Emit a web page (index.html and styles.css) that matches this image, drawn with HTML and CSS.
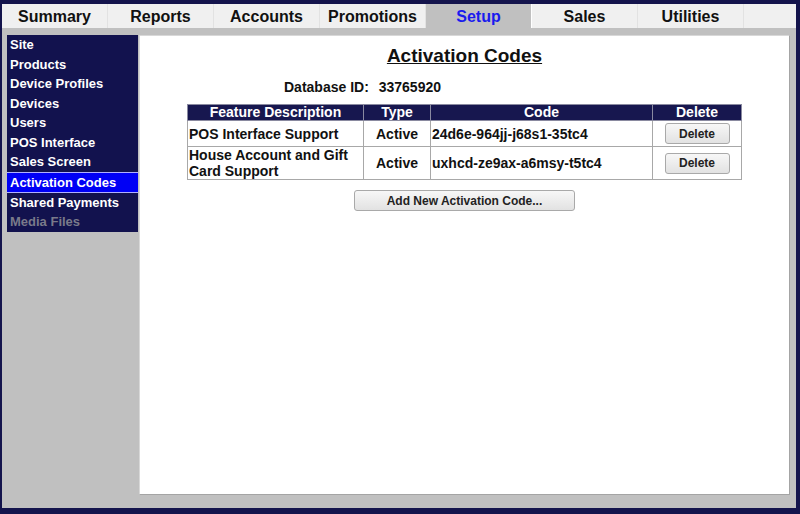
FILE: index.html
```html
<!DOCTYPE html>
<html lang="en">
<head>
  <meta charset="UTF-8" />
  <title>Setup - Activation Codes</title>
  <link rel="stylesheet" href="styles.css">
</head>
<body>
  <div class="frame">
    <div class="tabs">
      <div class="tab">Summary</div>
      <div class="tab">Reports</div>
      <div class="tab">Accounts</div>
      <div class="tab">Promotions</div>
      <div class="tab selected">Setup</div>
      <div class="tab">Sales</div>
      <div class="tab">Utilities</div>
      <div class="tab-fill"></div>
    </div>

    <div class="main">
      <div class="side-nav">
        <div class="nav-item">Site</div>
        <div class="nav-item">Products</div>
        <div class="nav-item">Device Profiles</div>
        <div class="nav-item">Devices</div>
        <div class="nav-item">Users</div>
        <div class="nav-item">POS Interface</div>
        <div class="nav-item">Sales Screen</div>
        <div class="nav-item active">Activation Codes</div>
        <div class="nav-item">Shared Payments</div>
        <div class="nav-item disabled">Media Files</div>
      </div>

      <div class="panel">
        <h1>Activation Codes</h1>
        <div class="db-row">
          <span class="db-label">Database ID:</span>
          <span class="db-value">33765920</span>
        </div>

        <table class="codes">
          <tr>
            <th class="col-desc">Feature Description</th>
            <th class="col-type">Type</th>
            <th class="col-code">Code</th>
            <th class="col-del">Delete</th>
          </tr>
          <tr>
            <td>POS Interface Support</td>
            <td class="center">Active</td>
            <td>24d6e-964jj-j68s1-35tc4</td>
            <td class="center"><button class="btn del">Delete</button></td>
          </tr>
          <tr>
            <td>House Account and Gift Card Support</td>
            <td class="center">Active</td>
            <td>uxhcd-ze9ax-a6msy-t5tc4</td>
            <td class="center"><button class="btn del">Delete</button></td>
          </tr>
        </table>

        <div class="add-row">
          <button class="btn add">Add New Activation Code...</button>
        </div>
      </div>
    </div>
  </div>
</body>
</html>
```

FILE: styles.css
```css
html, body {
  margin: 0;
  height: 100%;
}

body {
  background: #14144c;
  font-family: "Liberation Sans", Arial, sans-serif;
  font-weight: bold;
  overflow: hidden;
}

.frame {
  margin: 4px 4px 0 2px;
  height: 504px;
  background: #c0c0c0;
  display: flex;
  flex-direction: column;
}

.tabs {
  display: flex;
  height: 24px;
  background: #f0f0f0;
}

.tab {
  width: 105px;
  border-right: 1px solid #e2e2e2;
  text-align: center;
  font-size: 16px;
  line-height: 25px;
  color: #111;
}

.tab.selected {
  background: #c0c0c0;
  color: #1a1aee;
  border-right: 1px solid #fff;
}

.tab-fill {
  flex: 1;
}

.main {
  flex: 1;
  display: flex;
  align-items: flex-start;
  padding: 7px 6px 13px 5px;
}

.side-nav {
  width: 131px;
  background: #12124e;
}

.nav-item {
  height: 19.5px;
  line-height: 19.5px;
  padding-left: 3px;
  font-size: 13px;
  color: #fff;
  white-space: nowrap;
}

.nav-item.active {
  background: #0000f5;
  border-top: 1px solid #b0b0ff;
  border-bottom: 1px solid #b0b0ff;
  height: 19px;
}

.nav-item.disabled {
  color: #7a7a8a;
}

.panel {
  flex: 1;
  align-self: stretch;
  margin-left: 1px;
  background: #fff;
  border: 1px solid #a4a4a4;
  border-top-color: #d8d8d8;
  border-left-color: #d8d8d8;
}

h1 {
  margin: 9px 0 0;
  text-align: center;
  font-size: 19px;
  line-height: 22px;
  text-decoration: underline;
  color: #111;
}

.db-row {
  margin-top: 12px;
  padding-left: 144px;
  font-size: 14px;
  line-height: 16px;
  color: #111;
}

.db-value {
  margin-left: 6px;
}

.codes {
  margin: 9px auto 0;
  border-collapse: collapse;
  font-size: 14px;
  color: #111;
}

.codes th,
.codes td {
  border: 1px solid #a8a8a8;
  padding: 0 1px;
  line-height: 16px;
  vertical-align: middle;
  text-align: left;
}

.codes th {
  background: #17174f;
  color: #fff;
  text-align: center;
  line-height: 15px;
  border-color: #8a8aa0;
}

.col-desc { width: 173px; }
.col-type { width: 64px; }
.col-code { width: 219px; }
.col-del { width: 86px; }

.codes td.center {
  text-align: center;
}

.btn {
  font-family: "Liberation Sans", Arial, sans-serif;
  font-weight: bold;
  font-size: 12px;
  color: #222;
  background: linear-gradient(#f7f7f7, #e2e2e2);
  border: 1px solid #a9a9a9;
  border-radius: 3px;
  padding: 0;
  height: 21px;
}

.btn.del {
  width: 65px;
  margin: 2px 0;
}

.add-row {
  margin-top: 10px;
  text-align: center;
}

.btn.add {
  width: 221px;
}
```
